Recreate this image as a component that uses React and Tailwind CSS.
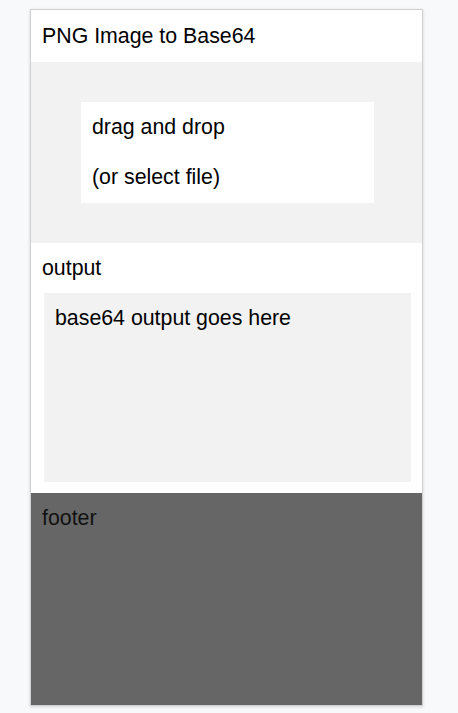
export default function App() {
  const font = { fontFamily: '"Liberation Sans", Arial, sans-serif' };
  return (
    <div className="min-h-[713px] bg-[#f8f9fa] pt-[9px]" style={font}>
      <div className="ml-[30px] w-[393px] border border-[#d0d0d0] shadow-[0_1px_3px_rgba(0,0,0,0.15)] bg-white text-[21.33px] leading-[30px] text-black flex flex-col h-[697px]">
        <div className="px-[11px] pt-[11px] pb-[11px]">PNG Image to Base64</div>
        <div className="bg-[#f2f2f2] py-[40px]">
          <div className="ml-[50px] w-[293px] bg-white pl-[11px] pr-[10px] pt-[10px] pb-[11px]">
            <p className="mb-[20px]">drag and drop</p>
            <p>(or select file)</p>
          </div>
        </div>
        <div className="px-[10px] pt-[10px] pb-[11px]">
          <div className="pl-[1px]">output</div>
          <div className="mt-[10px] ml-[3px] mr-[1px] h-[189px] bg-[#f2f2f2] px-[11px] py-[10px]">base64 output goes here</div>
        </div>
        <div className="flex-1 bg-[#666666] px-[11px] pt-[10px] text-[#111]">footer</div>
      </div>
    </div>
  );
}
